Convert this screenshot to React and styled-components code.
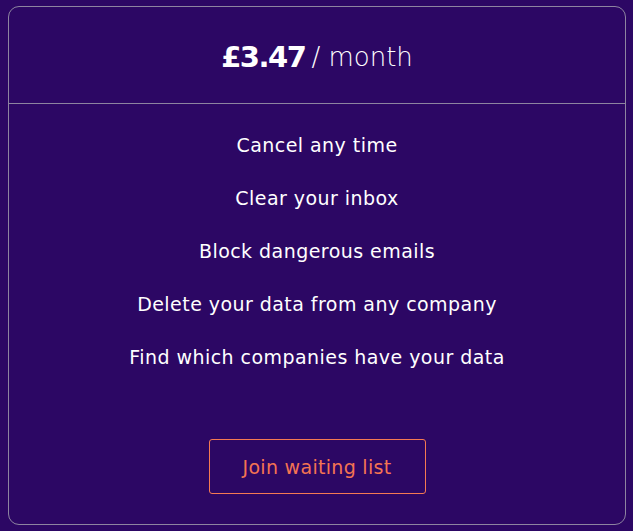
import React from "react";
import styled, { createGlobalStyle } from "styled-components";

const GlobalStyle = createGlobalStyle`
  html, body {
    margin: 0;
    padding: 0;
    background: #2c0764;
  }
  body {
    font-family: "DejaVu Sans", "Noto Sans", sans-serif;
  }
`;

const Page = styled.div`
  width: 633px;
  height: 531px;
  box-sizing: border-box;
  padding: 6px 7px 6px 8px;
`;

const Card = styled.div`
  height: 100%;
  box-sizing: border-box;
  border: 1px solid #8d84a0;
  border-radius: 11px;
  display: flex;
  flex-direction: column;
  color: #ffffff;
`;

const Header = styled.div`
  height: 97px;
  display: flex;
  align-items: center;
  justify-content: center;
  border-bottom: 1px solid #8d84a0;
  padding-top: 3px;
  box-sizing: border-box;
`;

const Price = styled.span`
  font-size: 29px;
  font-weight: 700;
  letter-spacing: -1.5px;
`;

const Period = styled.span`
  font-size: 26px;
  font-weight: 300;
  margin-left: 6px;
`;

const Features = styled.ul`
  list-style: none;
  margin: 0;
  padding: 15px 0 0;
  text-align: center;
`;

const Feature = styled.li`
  font-size: 19px;
  line-height: 53px;
  letter-spacing: 0.45px;
`;

const Footer = styled.div`
  flex: 1;
  display: flex;
  justify-content: center;
  padding-top: 55px;
`;

const JoinButton = styled.button`
  width: 217px;
  height: 55px;
  background: transparent;
  border: 1px solid #f57a52;
  border-radius: 3px;
  color: #f47452;
  font-family: inherit;
  font-size: 19px;
  letter-spacing: 0.3px;
  cursor: pointer;
`;

const features = [
  "Cancel any time",
  "Clear your inbox",
  "Block dangerous emails",
  "Delete your data from any company",
  "Find which companies have your data",
];

export default function App() {
  return (
    <>
      <GlobalStyle />
      <Page>
        <Card>
          <Header>
            <Price>£3.47</Price>
            <Period>/ month</Period>
          </Header>
          <Features>
            {features.map((f) => (
              <Feature key={f}>{f}</Feature>
            ))}
          </Features>
          <Footer>
            <JoinButton>Join waiting list</JoinButton>
          </Footer>
        </Card>
      </Page>
    </>
  );
}
